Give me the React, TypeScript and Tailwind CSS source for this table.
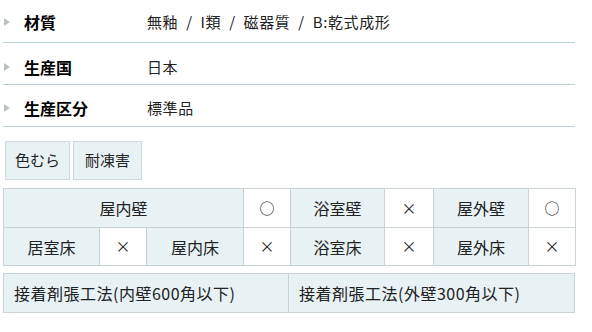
import React from 'react';

const specs = [
    { label: '材質', value: '無釉 / I類 / 磁器質 / B:乾式成形', pad: 'pt-[13px] h-[43px]' },
    { label: '生産国', value: '日本', pad: 'pt-[15px] h-[42px]' },
    { label: '生産区分', value: '標準品', pad: 'pt-[14px] h-[42px]' },
];

const tags = [
    { name: '色むら', w: 'w-[65px]' },
    { name: '耐凍害', w: 'w-[69px]' },
];

const colWidths = [96, 47, 97, 47, 94, 49, 95, 47];

const Arrow = () => (
    <svg width="6" height="8" viewBox="0 0 6 8" className="shrink-0">
        <path d="M0 0 L6 4 L0 8 Z" fill="#b9c3c7" />
    </svg>
);

export default function App() {
    const head = 'border border-[#c9d3d6] bg-[#e8f1f4] text-center font-normal';
    const mark = 'border border-[#c9d3d6] bg-white text-center text-[15px]';

    return (
        <div className="w-[592px] h-[332px] bg-white px-[3px] text-[#222] font-['Noto_Sans_CJK_JP',sans-serif]">
            <div className="w-[572px]">
                {specs.map(s => (
                    <div key={s.label} className={`flex items-start ${s.pad} border-b border-[#b9d0d5] leading-[18px]`}>
                        <div className="pl-[1px] w-[21px] pt-[5px]"><Arrow /></div>
                        <div className="w-[123px] text-[16px] font-bold text-black">{s.label}</div>
                        <div className="text-[15px] tracking-[0.6px] [word-spacing:4px]">{s.value}</div>
                    </div>
                ))}
            </div>

            <div className="flex gap-[3px] mt-[14px] ml-[2px]">
                {tags.map(t => (
                    <div key={t.name} className={`${t.w} h-[39px] flex items-center justify-center border border-[#cfdadd] bg-[#e8f1f4] text-[15px]`}>
                        {t.name}
                    </div>
                ))}
            </div>

            <table className="mt-[8px] w-[572px] table-fixed border-collapse text-[16px]">
                <colgroup>
                    {colWidths.map((w, i) => <col key={i} style={{ width: w }} />)}
                </colgroup>
                <tbody>
                    <tr className="h-[39px]">
                        <th colSpan={3} className={head}>屋内壁</th>
                        <td className={mark}>○</td>
                        <th className={head}>浴室壁</th>
                        <td className={mark}>×</td>
                        <th className={head}>屋外壁</th>
                        <td className={mark}>○</td>
                    </tr>
                    <tr className="h-[38px]">
                        <th className={head}>居室床</th>
                        <td className={mark}>×</td>
                        <th className={head}>屋内床</th>
                        <td className={mark}>×</td>
                        <th className={head}>浴室床</th>
                        <td className={mark}>×</td>
                        <th className={head}>屋外床</th>
                        <td className={mark}>×</td>
                    </tr>
                </tbody>
            </table>

            <div className="mt-[7px] w-[572px] grid grid-cols-2 text-[16px] tracking-[0.5px]">
                <div className="h-[40px] flex items-center pl-[10px] border border-[#c9d3d6] bg-[#e8f1f4]">接着剤張工法(内壁600角以下)</div>
                <div className="h-[40px] flex items-center pl-[10px] border border-l-0 border-[#c9d3d6] bg-[#e8f1f4]">接着剤張工法(外壁300角以下)</div>
            </div>
        </div>
    );
}
